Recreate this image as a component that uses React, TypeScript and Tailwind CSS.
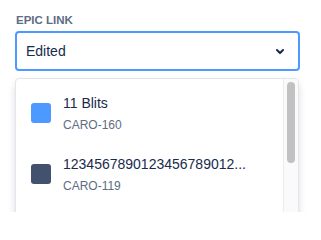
import { useState } from 'react'

type Epic = { id: string; name: string; color: string }

const EPICS: Epic[] = [
  { id: 'CARO-160', name: '11 Blits', color: 'bg-[#4c9aff]' },
  { id: 'CARO-119', name: '1234567890123456789012...', color: 'bg-[#42526e]' },
]

function ChevronDown() {
  return (
    <svg width="24" height="24" viewBox="0 0 24 24" className="text-[#172b4d]">
      <path
        d="M8.292 10.293a1.009 1.009 0 0 0 0 1.419l2.939 2.965c.218.215.5.322.779.322s.556-.107.769-.322l2.93-2.955a1.01 1.01 0 0 0 0-1.419.987.987 0 0 0-1.406 0l-2.298 2.317-2.307-2.327a.99.99 0 0 0-1.406 0z"
        fill="currentColor"
      />
    </svg>
  )
}

export default function App() {
  const [value] = useState('Edited')

  return (
    <div className="h-[212px] w-[321px] overflow-hidden bg-white px-[15px] pt-[12px] font-['Liberation_Sans',Arial,sans-serif]">
      <label className="block pl-px text-[11.5px] font-bold uppercase leading-4 text-[#5e6c84]">Epic link</label>
      <div className="mt-[3px] flex h-[40px] w-[285px] items-center justify-between rounded-[4px] border-2 border-[#4c9aff] bg-white pl-[9px] pr-[6px]">
        <span className="text-[14px] text-[#172b4d]">{value}</span>
        <ChevronDown />
      </div>

      <div className="mt-[7px] flex h-[160px] w-[284px] overflow-hidden rounded-[4px] border border-[#e4e6ea] bg-white shadow-[0_4px_8px_-2px_rgba(9,30,66,0.25)]">
        <ul className="min-w-0 flex-1 pt-[3px]">
          {EPICS.map((e) => (
            <li key={e.id} className="flex h-[61px] items-center gap-[12px] pl-[15px] pr-[16px]">
              <span className={`h-[20px] w-[20px] shrink-0 rounded-[3px] ${e.color}`} />
              <div className="min-w-0">
                <div className="whitespace-nowrap text-[14px] leading-5 text-[#172b4d]">{e.name}</div>
                <div className="mt-[4px] text-[12px] leading-4 text-[#5e6c84]">{e.id}</div>
              </div>
            </li>
          ))}
        </ul>
        <div className="w-[15px] shrink-0 border-l border-[#ececec] bg-[#fafafa] px-[3px] pt-[3px]">
          <div className="h-[81px] rounded-full bg-[#c1c1c1]" />
        </div>
      </div>
    </div>
  )
}
